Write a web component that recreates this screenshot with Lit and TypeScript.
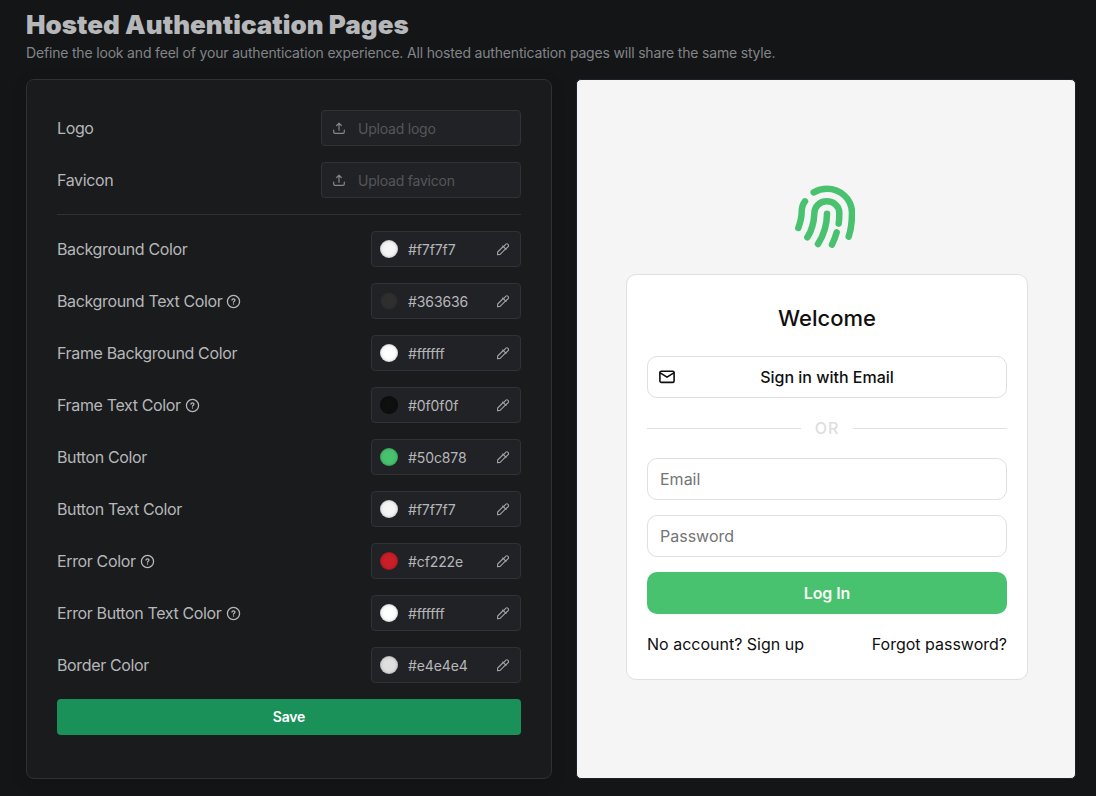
import { LitElement, html, css, svg } from "lit";
import { customElement } from "lit/decorators.js";

const uploadIcon = svg`<svg class="ico" width="14" height="14" viewBox="0 0 14 14"><path d="M7 9.2V2.3M4.7 4.5 7 2.2l2.3 2.3M1.7 9v2a1.4 1.4 0 0 0 1.4 1.4h7.8a1.4 1.4 0 0 0 1.4-1.4V9"/></svg>`;
const dropperIcon = svg`<svg class="ico" width="14" height="14" viewBox="0 0 14 14"><path d="M1.5 12.6 1.7 10 7.2 4.5l2.4 2.4-5.5 5.5zM6.7 4l3.4 3.4M7.6 4.6l2.3-2.5a1.75 1.75 0 0 1 2.4 2.4L9.8 6.9"/></svg>`;
const helpIcon = svg`<svg class="help" width="15" height="15" viewBox="0 0 15 15"><circle cx="7.5" cy="7.5" r="6.1"/><path d="M6 6.1c0-.7.6-1.2 1.5-1.2s1.5.5 1.5 1.2c0 1-1.5 1.1-1.5 2.1"/><path d="M7.5 9.9v.2"/></svg>`;

const colors: { label: string; value: string; swatch: string; help?: boolean }[] = [
  { label: "Background Color", value: "#f7f7f7", swatch: "#f5f5f5" },
  { label: "Background Text Color", value: "#363636", swatch: "#2f2f2f", help: true },
  { label: "Frame Background Color", value: "#ffffff", swatch: "#ffffff" },
  { label: "Frame Text Color", value: "#0f0f0f", swatch: "#0f0f0f", help: true },
  { label: "Button Color", value: "#50c878", swatch: "#48c26f" },
  { label: "Button Text Color", value: "#f7f7f7", swatch: "#f5f5f5" },
  { label: "Error Color", value: "#cf222e", swatch: "#c81f28", help: true },
  { label: "Error Button Text Color", value: "#ffffff", swatch: "#ffffff", help: true },
  { label: "Border Color", value: "#e4e4e4", swatch: "#dfdfdf" },
];

@customElement("app-root")
export class AppRoot extends LitElement {
  static styles = css`
    :host { display: block; box-sizing: border-box; height: 796px; overflow: hidden; background: #141517; color: #b6b7b9; font-family: Inter, sans-serif; padding: 8px 20px 0 26px; }
    * { box-sizing: border-box; }
    h1 { margin: 0; font-size: 26px; line-height: 34px; font-weight: 900; letter-spacing: 0.02px; white-space: nowrap; }
    .sub { margin: 0; font-size: 14px; line-height: 22px; color: #828488; letter-spacing: -0.178px; }
    .cols { display: grid; grid-template-columns: 526px 500px; gap: 24px; height: 700px; margin-top: 15px; }
    .panel { background: #1a1b1d; border: 1px solid #2f3135; border-radius: 8px; padding: 30px; display: flex; flex-direction: column; gap: 16px; box-shadow: 0 4px 16px rgba(0,0,0,.12); }
    .row { height: 36px; flex: none; display: flex; align-items: center; justify-content: space-between; font-size: 16px; letter-spacing: -0.36px; }
    .label { display: flex; align-items: center; gap: 4px; }
    .line { height: 1px; flex: none; background: #2f3135; }
    .field { display: flex; align-items: center; height: 36px; width: 150px; border: 1px solid #303237; border-radius: 4px; background: #212226; padding: 0 10px 0 8px; font-size: 14px; letter-spacing: -0.1px; }
    .upload { width: 200px; padding-left: 10px; color: #55565a; gap: 12px; letter-spacing: -0.22px; }
    .upload .ico { color: #85878b; stroke-width: 1.2; }
    .dot { width: 18px; height: 18px; border-radius: 50%; box-shadow: inset 0 0 0 1px rgba(0,0,0,.1), inset 0 0 4px rgba(0,0,0,.15); margin-right: 10px; }
    .value { flex: 1; line-height: 18px; padding-top: 1px; }
    .ico, .help, .mail { fill: none; stroke: currentColor; stroke-linecap: round; stroke-linejoin: round; display: block; }
    .ico { color: #a0a1a5; stroke-width: 1.1; }
    .help { stroke-width: 1.3; }
    .save { height: 36px; flex: none; border-radius: 4px; background: #1b915a; color: #fff; font-weight: 600; font-size: 14px; letter-spacing: -0.2px; display: flex; align-items: center; justify-content: center; padding-bottom: 1px; }
    .preview { border: 1px solid #1c202b; border-radius: 5px; background: #f5f5f5; display: flex; flex-direction: column; align-items: center; color: #0f0f0f; font-size: 16px; padding: 105px 0 0; }
    .finger { display: block; fill: none; stroke: #48c26f; stroke-linecap: round; stroke-linejoin: round; stroke-width: 19.5; margin-right: 2px; }
    .card { width: 402px; height: 406px; margin: 26px 0 0 2px; border: 1px solid #e0e0e0; border-radius: 10px; background: #fff; padding: 28px 20px 0; }
    .title { text-align: center; font-size: 22px; line-height: 30px; font-weight: 500; }
    .box { height: 42px; border: 1px solid #dfdfdf; border-radius: 10px; padding: 0 12px; display: flex; align-items: center; color: #747474; }
    .email { margin-top: 23px; color: #0f0f0f; font-weight: 500; padding: 0 11px; }
    .email span { flex: 1; text-align: center; padding-right: 16px; }
    .mail { stroke-width: 1.6; }
    .or { display: flex; align-items: center; gap: 14px; height: 20px; margin: 20px 0; color: #dedede; font-weight: 500; letter-spacing: 1px; }
    .or::before, .or::after { content: ""; height: 1px; background: #e0e0e0; flex: 1; }
    .gap { margin-top: 15px; }
    .login { background: #48c26f; border: 0; color: #f7f7f7; justify-content: center; font-weight: 600; letter-spacing: -0.1px; }
    .links { display: flex; justify-content: space-between; line-height: 20px; margin-top: 20px; }
  `;

  render() {
    return html`
      <h1>Hosted Authentication Pages</h1>
      <p class="sub">Define the look and feel of your authentication experience. All hosted authentication pages will share the same style.</p>
      <div class="cols">
        <section class="panel">
          ${["logo", "favicon"].map((n) => html`
            <div class="row"><span>${n[0].toUpperCase() + n.slice(1)}</span>
              <div class="field upload">${uploadIcon}<span class="value">Upload ${n}</span></div></div>`)}
          <div class="line"></div>
          ${colors.map((c) => html`
            <div class="row"><span class="label">${c.label}${c.help ? helpIcon : ""}</span>
              <div class="field"><span class="dot" style="background:${c.swatch}"></span><span class="value">${c.value}</span>${dropperIcon}</div></div>`)}
          <div class="save">Save</div>
        </section>
        <section class="preview">
          <svg class="finger" width="60" height="63" viewBox="44 43 180 189">
            <path d="M100 65C112 58 126 54 140 54C180 54 214 85 215 125C215 150 213 175 205 198"/>
            <path d="M175 159C177 148 177 137 177 127C177 107 160 92 139 92C118 92 102 108 102 128C101 155 94 180 81 200"/>
            <path d="M74 92C66 102 64 112 64 125C64 142 59 158 54 172"/>
            <path d="M140 129C140 160 130 193 113 220"/>
            <path d="M169 185C166 197 161 210 155 222"/>
          </svg>
          <div class="card">
            <div class="title">Welcome</div>
            <div class="box email">
              <svg class="mail" width="16" height="14" viewBox="0 0 16 14"><rect x="0.9" y="1.2" width="14.2" height="11.2" rx="1.4"/><path d="M1.2 2.8 8 7.2l6.8-4.4"/></svg>
              <span>Sign in with Email</span>
            </div>
            <div class="or">OR</div>
            <div class="box">Email</div>
            <div class="box gap">Password</div>
            <div class="box login gap">Log In</div>
            <div class="links"><span>No account? Sign up</span><span>Forgot password?</span></div>
          </div>
        </section>
      </div>`;
  }
}
